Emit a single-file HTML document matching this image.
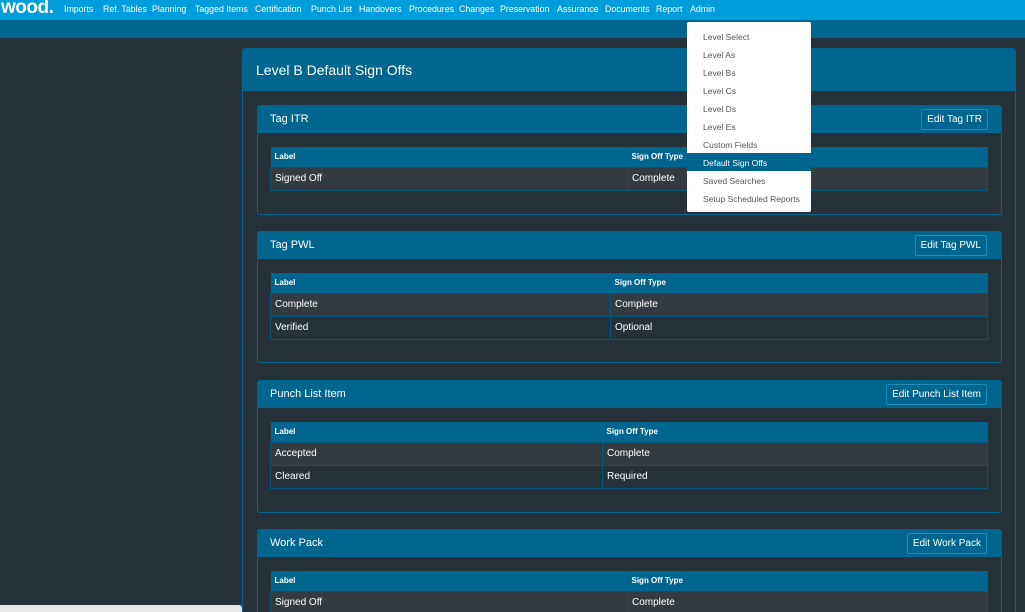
<!DOCTYPE html>
<html><head><meta charset="utf-8"><style>
*{box-sizing:border-box;margin:0;padding:0}
html,body{width:1025px;height:612px;overflow:hidden}
body{background:#263238;font-family:"Liberation Sans",sans-serif;position:relative;color:#fff}
.nav{position:absolute;left:0;top:0;width:1025px;height:20px;background:#009ddc;font-size:8.8px;white-space:nowrap}
.nav .logo{position:absolute;left:1px;top:-3px;font-size:19px;font-weight:bold;letter-spacing:-0.5px}
.nav span.i{position:absolute;top:4px}
.sub{position:absolute;left:0;top:20px;width:1025px;height:18px;background:#006690}
.outer{position:absolute;left:242px;top:48px;width:774px;height:570px;border:1px solid #00658f;border-radius:3px}
.outer .h{height:42px;background:#00658f;font-size:14px;padding:13px 0 0 13px}
.p{position:absolute;left:257px;width:745px;border:1px solid #00658f;border-radius:3px}
.p .h{height:27px;background:#00658f;font-size:11px;padding:7px 0 0 12px;position:relative}
.btn{position:absolute;right:14px;top:3px;height:21px;border:1px solid #1f8bbb;border-radius:2px;font-size:10px;padding:4px 5px 0}
table{position:absolute;left:12px;width:718px;border-collapse:collapse;font-size:10px}
th{background:#00658f;height:20px;text-align:left;font-size:8px;padding-left:4px}
td{height:23px;padding-left:4px;border:1px solid #00587c}
tr.o td{background:#333b40}
tr.e td{background:#263238}
.dd{position:absolute;left:687px;top:22px;width:124px;height:190px;background:#fff;border-radius:2px;font-size:8.5px;color:#555}
.dd div{position:absolute;left:0;width:124px;height:18px;padding:5px 0 0 16px}
.dd .a{background:#00658f;color:#fff}
.st{position:absolute;left:0;top:605px;width:242px;height:7px;background:#e8e8e8;border-radius:0 3px 0 0}
</style></head><body>
<div class="nav"><span class="logo">wood.</span>
<span class="i" style="left:64px">Imports</span><span class="i" style="left:103px">Ref. Tables</span><span class="i" style="left:152px">Planning</span><span class="i" style="left:195px">Tagged Items</span><span class="i" style="left:255px">Certification</span><span class="i" style="left:311px">Punch List</span><span class="i" style="left:359px">Handovers</span><span class="i" style="left:409px">Procedures</span><span class="i" style="left:459px">Changes</span><span class="i" style="left:500px">Preservation</span><span class="i" style="left:557px">Assurance</span><span class="i" style="left:605px">Documents</span><span class="i" style="left:656px">Report</span><span class="i" style="left:690px">Admin</span></div>
<div class="sub"></div>
<div class="outer"><div class="h">Level B Default Sign Offs</div></div>

<div class="p" style="top:105px;height:110px"><div class="h">Tag ITR<span class="btn" style="right:13px">Edit Tag ITR</span></div>
<table style="top:41px"><tr><th style="width:357px">Label</th><th>Sign Off Type</th></tr>
<tr class="o"><td>Signed Off</td><td>Complete</td></tr></table></div>

<div class="p" style="top:231px;height:132px"><div class="h">Tag PWL<span class="btn">Edit Tag PWL</span></div>
<table style="top:41px"><tr><th style="width:340px">Label</th><th>Sign Off Type</th></tr>
<tr class="o"><td>Complete</td><td>Complete</td></tr><tr class="e"><td>Verified</td><td>Optional</td></tr></table></div>

<div class="p" style="top:380px;height:133px"><div class="h">Punch List Item<span class="btn">Edit Punch List Item</span></div>
<table style="top:41px"><tr><th style="width:332px">Label</th><th>Sign Off Type</th></tr>
<tr class="o"><td>Accepted</td><td>Complete</td></tr><tr class="e"><td>Cleared</td><td>Required</td></tr></table></div>

<div class="p" style="top:529px;height:90px"><div class="h">Work Pack<span class="btn">Edit Work Pack</span></div>
<table style="top:41px"><tr><th style="width:357px">Label</th><th>Sign Off Type</th></tr>
<tr class="o"><td>Signed Off</td><td>Complete</td></tr></table></div>

<div class="dd">
<div style="top:5px">Level Select</div><div style="top:23px">Level As</div><div style="top:41px">Level Bs</div><div style="top:59px">Level Cs</div><div style="top:77px">Level Ds</div><div style="top:95px">Level Es</div><div style="top:113px">Custom Fields</div><div class="a" style="top:131px">Default Sign Offs</div><div style="top:149px">Saved Searches</div><div style="top:167px">Setup Scheduled Reports</div>
</div>
<div class="st"></div>
</body></html>
